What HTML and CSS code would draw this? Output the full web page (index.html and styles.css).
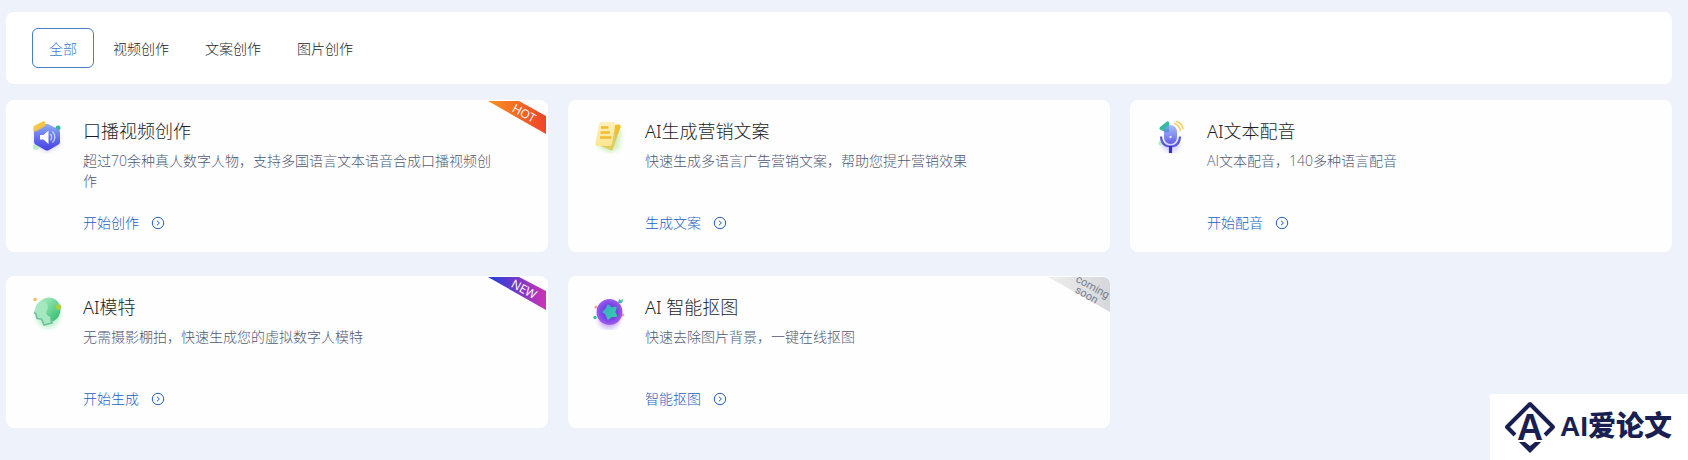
FILE: index.html
```html
<!DOCTYPE html>
<html lang="zh-CN">
<head>
<meta charset="utf-8">
<meta name="viewport" content="width=device-width, initial-scale=1">
<title>AI 创作</title>
<link rel="stylesheet" href="styles.css">
</head>
<body>
<svg width="0" height="0" class="defs" aria-hidden="true">
  <defs>
    <linearGradient id="blue" x1="0" y1="0" x2="0" y2="1"><stop offset="0" stop-color="#86a6f8"/><stop offset="1" stop-color="#3c36e0"/></linearGradient>
    <linearGradient id="paper" x1="0" y1="0" x2="0" y2="1"><stop offset="0" stop-color="#fdf0bd"/><stop offset="1" stop-color="#fbe690"/></linearGradient>
    <linearGradient id="green" x1="0" y1="0" x2="1" y2="1"><stop offset="0" stop-color="#b5f0c8"/><stop offset="0.8" stop-color="#45c57c"/></linearGradient>
    <linearGradient id="teal" x1="0" y1="0" x2="1" y2="1"><stop offset="0" stop-color="#3aa7c4"/><stop offset="1" stop-color="#35d3a6"/></linearGradient>
    <radialGradient id="purple"><stop offset="0" stop-color="#5f3be0"/><stop offset="0.65" stop-color="#7a48e6"/><stop offset="1" stop-color="#a25cf0"/></radialGradient>
    <linearGradient id="hot"><stop offset="0" stop-color="#f7931e"/><stop offset="1" stop-color="#f0432c"/></linearGradient>
    <linearGradient id="new"><stop offset="0.1" stop-color="#2e3fd8"/><stop offset="1" stop-color="#cf32b4"/></linearGradient>
    <linearGradient id="soon"><stop offset="0" stop-color="#eeeeee"/><stop offset="1" stop-color="#d6d7da"/></linearGradient>
    <filter id="glow" x="-50%" y="-50%" width="200%" height="200%"><feGaussianBlur stdDeviation="2"/></filter>
    <symbol id="go" viewBox="0 0 14 14"><circle cx="7" cy="7" r="5.7" fill="none" stroke="currentColor"/><path d="M6 4.8 8.4 7 6 9.2" fill="none" stroke="currentColor"/></symbol>
  </defs>
</svg>

<main class="page">
  <nav class="tabs" aria-label="分类">
    <button type="button" class="tab tab-active" aria-pressed="true">全部</button>
    <button type="button" class="tab">视频创作</button>
    <button type="button" class="tab">文案创作</button>
    <button type="button" class="tab">图片创作</button>
  </nav>

  <section class="grid">
    <article class="card">
      <svg class="icon" viewBox="0 0 36 36" aria-hidden="true">
        <path d="M17 12 29 18v10l-12 6-12-6V18z" fill="#8c8cf5" opacity=".4" filter="url(#glow)"/>
        <path d="M4 8 13 3.500q2-.6 2 1.500v4L5 15q-1.500 0-1.500-2z" fill="#f4c23e"/>
        <circle cx="28" cy="10" r="2.500" fill="#36b79c"/>
        <circle cx="6" cy="29" r="3" fill="#b9ecc9"/>
        <path d="M15.500 6.300q1.500-.8 3 0l10 5.200q1.500 1 1.500 2.500v10q0 1.600-1.500 2.600l-10 5.600q-1.500.8-3 0l-10-5.600Q4 25.600 4 24V14q0-1.500 1.500-2.500z" fill="url(#blue)" opacity=".95"/>
        <path d="M3.500 9 13 3.500q2.500-.5 2.500 1.500v3l-9.500 5.500q-2.500.5-2.500-1.500z" fill="#f6c544" opacity=".9"/>
        <path d="M10 17h3.500l5-4.500v13.500l-5-4.500H10z" fill="#fff"/>
        <path d="M20.500 16q2.300 3.200 0 6.500M22.500 13.500q4.800 5.700 0 11" fill="none" stroke="#c9d3ff" stroke-width="1.300"/>
      </svg>
      <div class="body">
        <h2 class="title">口播视频创作</h2>
        <p class="desc">超过70余种真人数字人物，支持多国语言文本语音合成口播视频创作</p>
        <a class="link" href="#">开始创作<svg class="go" aria-hidden="true"><use href="#go"/></svg></a>
      </div>
      <svg class="ribbon" viewBox="0 0 58 34" width="58" height="34"><path d="M0 0h31l27 15v18z" fill="url(#hot)"/><text class="ribbon-text" transform="translate(34 16) rotate(29)">HOT</text></svg>
    </article>

    <article class="card">
      <svg class="icon" viewBox="0 0 36 36" aria-hidden="true">
        <path d="M8 12 30 12 27 31 18 35 6 29z" fill="#b6e89a" opacity=".6" filter="url(#glow)"/>
        <path d="M14 8 27 7q2 .5 1.500 2.500L21 31q-1 2-3 1L6 27z" fill="#dfcd62"/>
        <path d="M23 6.500h3.500q2.500.5 2 2.500L23 21z" fill="#f4bd2a"/>
        <path d="M9 4h13q1.500 0 1.500 1.500L20 26q-.5 2-2.500 2H5q-1.800 0-1.500-2L7 6q.4-2 2-2z" fill="url(#paper)"/>
        <path d="M9 9.500h7.500M8.500 14.500h9.500M8 19.500h11.500" stroke="#f1bb32" stroke-width="2.600"/>
      </svg>
      <div class="body">
        <h2 class="title">AI生成营销文案</h2>
        <p class="desc">快速生成多语言广告营销文案，帮助您提升营销效果</p>
        <a class="link" href="#">生成文案<svg class="go" aria-hidden="true"><use href="#go"/></svg></a>
      </div>
    </article>

    <article class="card">
      <svg class="icon" viewBox="0 0 36 36" aria-hidden="true">
        <ellipse cx="17" cy="27" rx="9" ry="7" fill="#8b87f0" opacity=".35" filter="url(#glow)"/>
        <circle cx="7" cy="25" r="2.500" fill="#b9ecc9"/>
        <path d="M6 9 13 3.500q2-.6 2 1.500v9l-3 .5-6-3q-1.500-1.500 0-2.500z" fill="#35b9a0"/>
        <path d="M20 5.500q5 1 6.500 7.500M22 3.500q6 1 7 7.500" fill="none" stroke="#f3cc62" stroke-width="1.500"/>
        <rect x="10" y="7" width="13" height="19" rx="6.500" fill="url(#blue)" opacity=".75"/>
        <path d="M7 18.500q.5 10 9.500 10t9.500-10" fill="none" stroke="#5a58dc" stroke-width="2.200"/>
        <path d="M16.500 28v7" stroke="#3830c8" stroke-width="3.200"/>
        <circle cx="16.500" cy="19" r="1.200" fill="#dfe7ff"/>
      </svg>
      <div class="body">
        <h2 class="title">AI文本配音</h2>
        <p class="desc">AI文本配音，140多种语言配音</p>
        <a class="link" href="#">开始配音<svg class="go" aria-hidden="true"><use href="#go"/></svg></a>
      </div>
    </article>

    <article class="card">
      <svg class="icon" viewBox="0 0 36 36" aria-hidden="true">
        <circle cx="18" cy="22" r="12" fill="#8ee6ab" opacity=".5" filter="url(#glow)"/>
        <circle cx="5" cy="5.500" r="1.700" fill="#f3b65c"/>
        <path d="M9 8q5-5 11-4.500 10 1.500 10.500 12 0 8-7.500 12l-4-1z" fill="url(#green)"/>
        <circle cx="28.500" cy="13" r="2.800" fill="#a9cf3d"/>
        <path d="M11 7.500Q6 9 5.500 14L4 18.500l2 1.500 1 4.500 4.500.5 2.500 6 8-2-1.500-6q-4-1-4.500-5 3-4 1-8-2.500-3.500-6-2.500z" fill="#a5e8c0"/>
        <path d="m4 18.500 2 1.500 1 4.500 4.500.5 2.500 6 8-2-1.500-5" fill="none" stroke="#6cbf98" stroke-width="1.600" stroke-linejoin="round"/>
      </svg>
      <div class="body">
        <h2 class="title">AI模特</h2>
        <p class="desc">无需摄影棚拍，快速生成您的虚拟数字人模特</p>
        <a class="link" href="#">开始生成<svg class="go" aria-hidden="true"><use href="#go"/></svg></a>
      </div>
      <svg class="ribbon" viewBox="0 0 58 34" width="58" height="34"><path d="M0 0h31l27 14v19z" fill="url(#new)"/><text class="ribbon-text" transform="translate(34 16) rotate(29)">NEW</text></svg>
    </article>

    <article class="card">
      <svg class="icon" viewBox="0 0 36 36" aria-hidden="true">
        <circle cx="17" cy="24" r="11" fill="#b184f5" opacity=".6" filter="url(#glow)"/>
        <circle cx="4" cy="13" r="1.600" fill="#f2a58a"/><circle cx="30.500" cy="21" r="1.800" fill="#f2b08a"/>
        <circle cx="17.500" cy="18" r="13" fill="url(#purple)"/>
        <path d="m27 5 2 1.500 2-1.500-.5 3-2 1.500-2.500-1z" fill="#41b9a6"/><circle cx="3" cy="23.500" r="1.700" fill="#35bda0"/>
        <path d="m16 11 3.500 3 4.500-.5-1.500 4.500 2 4-4.800.2-3.700 2.800-1.600-4.500-3.400-2.500 3.200-3z" fill="url(#teal)" stroke="url(#teal)" stroke-width="1.500" stroke-linejoin="round"/>
      </svg>
      <div class="body">
        <h2 class="title">AI 智能抠图</h2>
        <p class="desc">快速去除图片背景，一键在线抠图</p>
        <a class="link" href="#">智能抠图<svg class="go" aria-hidden="true"><use href="#go"/></svg></a>
      </div>
      <svg class="ribbon ribbon-soon" viewBox="0 0 62 35" width="62" height="35"><path d="M0 0h55q7 1 7 7v28z" fill="url(#soon)"/><g class="soon-text"><text transform="translate(43 13) rotate(29)">coming</text><text transform="translate(37 21) rotate(29)">soon</text></g></svg>
    </article>
  </section>
</main>

<aside class="brand">
  <svg class="brand-mark" viewBox="0 0 52 52" aria-hidden="true">
    <path d="M11 34 3 26 26 3 49 26 41 34" fill="none" stroke="#1a1f52" stroke-width="4" stroke-linejoin="round"/>
    <path d="M15 41h6l5 4 5-4h6L26 52z" fill="#1a1f52"/>
    <text class="brand-letter" x="26" y="39">A</text>
  </svg>
  <span class="brand-name">AI爱论文</span>
</aside>
</body>
</html>
```
FILE: styles.css
```css
* {
  box-sizing: border-box;
}

body {
  margin: 0;
  background: #edf2fb;
  color: #1c1e26;
  font-family: "Open Sans", "Noto Sans CJK SC", sans-serif;
  font-size: 14px;
  line-height: 20px;
}

.defs {
  position: absolute;
}

.page {
  padding: 12px 16px 32px 6px;
}

.tabs {
  display: flex;
  gap: 2px;
  padding: 16px 26px;
  background: #fff;
  border-radius: 8px;
}

.tab {
  height: 40px;
  padding: 2px 16px 0;
  border: 1px solid transparent;
  border-radius: 6px;
  background: none;
  color: inherit;
  font: inherit;
  font-weight: 300;
  cursor: pointer;
}

.tab-active {
  border-color: #4a7cc9;
  color: #3f78d0;
}

.grid {
  display: grid;
  grid-template-columns: repeat(3, 1fr);
  gap: 24px 20px;
  margin-top: 16px;
}

.card {
  position: relative;
  display: flex;
  gap: 17px;
  min-height: 152px;
  padding: 18px 48px 19px 24px;
  background: #fefefe;
  border-radius: 8px;
}

.icon {
  flex: none;
  width: 36px;
  height: 36px;
}

.body {
  display: flex;
  flex: 1;
  flex-direction: column;
  align-items: flex-start;
}

.title {
  margin: 0;
  font-family: "Noto Sans", "Noto Sans CJK SC", sans-serif;
  font-size: 18px;
  font-weight: 300;
  line-height: 26px;
}

.desc {
  margin: 7px 0 0;
  color: #505a74;
  font-weight: 300;
}

.link {
  display: flex;
  align-items: center;
  gap: 12px;
  margin-top: auto;
  color: #2560bf;
  font-weight: 300;
  text-decoration: none;
}

.go {
  width: 14px;
  height: 14px;
}

.ribbon {
  position: absolute;
  top: 1px;
  right: 2px;
  overflow: hidden;
}

.ribbon-soon {
  right: 0;
}

.ribbon-text {
  fill: #fff;
  font-size: 12px;
  text-anchor: middle;
}

.soon-text {
  fill: #777b8e;
  font-family: Roboto, sans-serif;
  font-size: 11px;
  text-anchor: middle;
}

.brand {
  position: fixed;
  right: 0;
  bottom: 0;
  display: flex;
  align-items: center;
  gap: 4px;
  padding: 7px 16px 7px 14px;
  background: #fff;
  color: #1a1f52;
}

.brand-mark {
  width: 52px;
  height: 52px;
}

.brand-letter {
  fill: #1a1f52;
  font-family: "Liberation Sans", sans-serif;
  font-size: 36px;
  font-weight: 700;
  text-anchor: middle;
}

.brand-name {
  font-family: "Liberation Sans", "Noto Sans CJK SC", sans-serif;
  font-size: 28px;
  font-weight: 900;
  line-height: 32px;
}
```
